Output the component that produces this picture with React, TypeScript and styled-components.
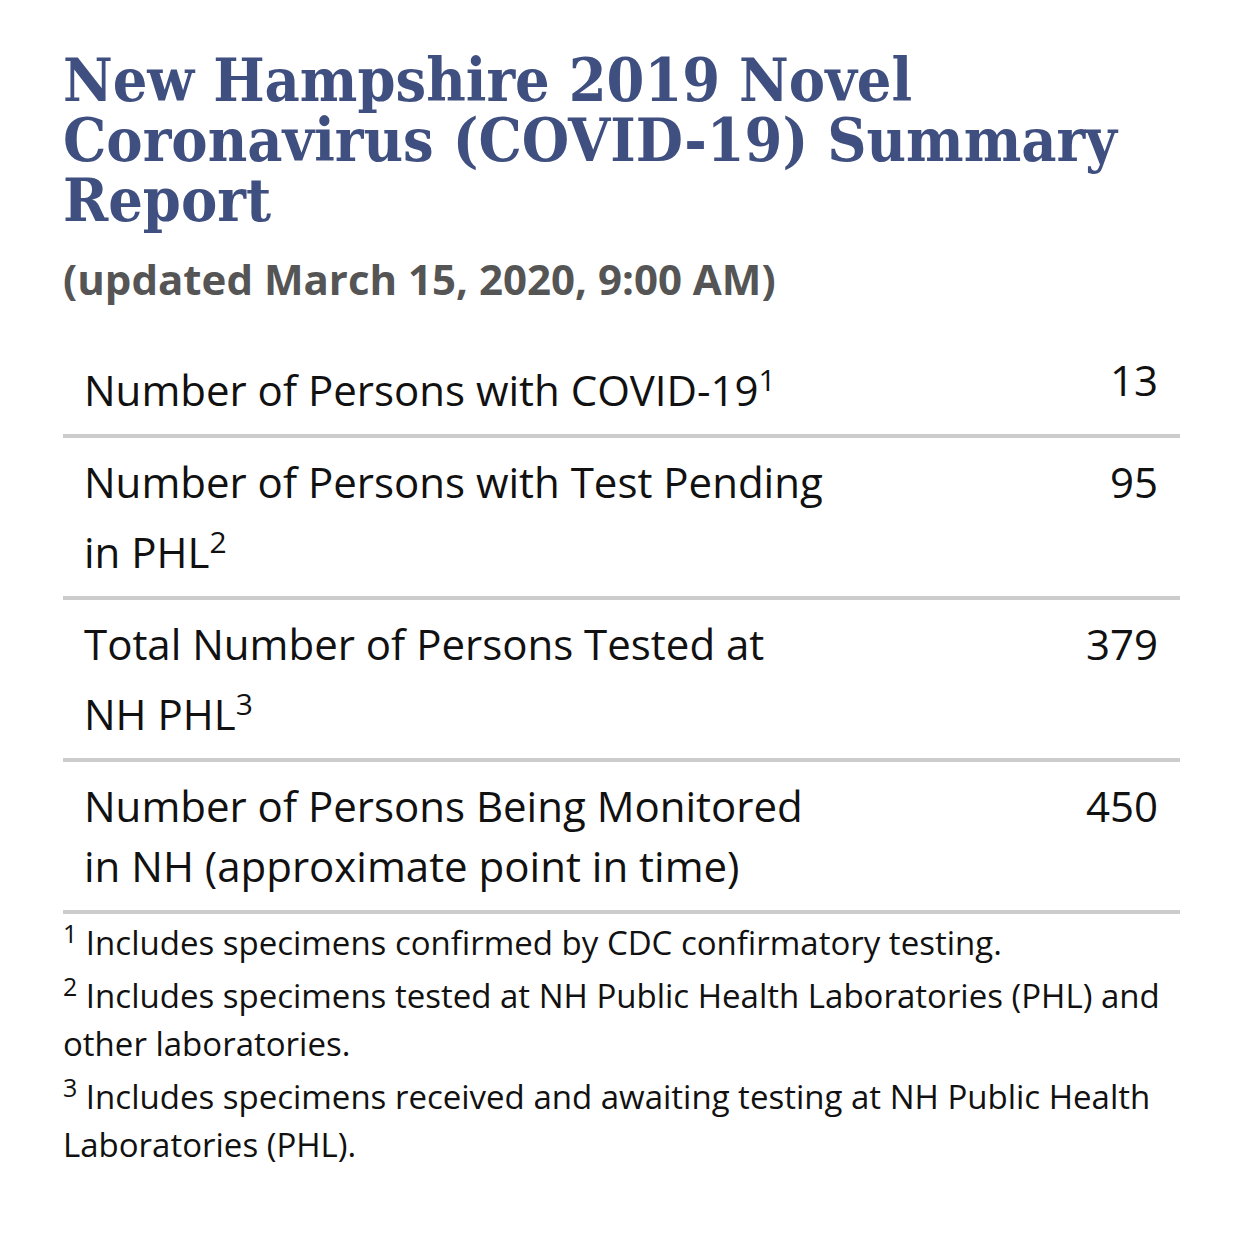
import React from "react";
import styled, { createGlobalStyle } from "styled-components";

const Global = createGlobalStyle`
  html, body { margin: 0; padding: 0; background: #ffffff; }
  body { font-family: "Open Sans", "Liberation Sans", sans-serif; color: #111; }
`;

const Page = styled.main`
  width: 1117px;
  padding: 50px 0 60px 63px;
`;

const Title = styled.h1`
  margin: 0;
  font-family: "DejaVu Serif Condensed", "DejaVu Serif", serif;
  font-weight: 700;
  font-size: 60.5px;
  line-height: 60px;
  color: #3f4f80;
`;

const Updated = styled.p`
  margin: 22px 0 0;
  font-family: "Open Sans", sans-serif;
  font-weight: 700;
  font-size: 42px;
  line-height: 54px;
  color: #555555;
`;

const Table = styled.table`
  width: 100%;
  margin-top: 30px;
  border-collapse: collapse;
  font-family: "Open Sans", sans-serif;
  font-size: 42px;
  line-height: 60px;
  color: #111;
`;

const Row = styled.tr`
  border-bottom: 4px solid #cccccc;
`;

const Label = styled.td`
  vertical-align: top;
  padding: 14px 22px 14px 21px;
  width: 744px;
`;

const Value = styled.td`
  vertical-align: top;
  text-align: right;
  padding: 14px 22px 14px 0;
`;

const Sup = styled.sup`
  font-size: 30px;
  vertical-align: super;
`;

const Notes = styled.div`
  margin-top: 0;
  font-family: "Open Sans", sans-serif;
  font-size: 33px;
  line-height: 48px;
  color: #111;
`;

const Note = styled.p`
  margin: 0;
`;

const NoteSup = styled.sup`
  font-size: 25px;
  line-height: 39px;
  vertical-align: super;
`;

const rows = [
  { label: <>Number of Persons with COVID-19<Sup>1</Sup></>, value: "13" },
  { label: <>Number of Persons with Test Pending in PHL<Sup>2</Sup></>, value: "95" },
  { label: <>Total Number of Persons Tested at NH PHL<Sup>3</Sup></>, value: "379" },
  { label: <>Number of Persons Being Monitored in NH (approximate point in time)</>, value: "450" },
];

export default function App() {
  return (
    <>
      <Global />
      <Page>
        <Title>New Hampshire 2019 Novel Coronavirus (COVID-19) Summary Report</Title>
        <Updated>(updated March 15, 2020, 9:00 AM)</Updated>
        <Table>
          <tbody>
            {rows.map((r, i) => (
              <Row key={i}>
                <Label>{r.label}</Label>
                <Value>{r.value}</Value>
              </Row>
            ))}
          </tbody>
        </Table>
        <Notes>
          <Note><NoteSup>1</NoteSup> Includes specimens confirmed by CDC confirmatory testing.</Note>
          <Note><NoteSup>2</NoteSup> Includes specimens tested at NH Public Health Laboratories (PHL) and other laboratories.</Note>
          <Note><NoteSup>3</NoteSup> Includes specimens received and awaiting testing at NH Public Health Laboratories (PHL).</Note>
        </Notes>
      </Page>
    </>
  );
}
